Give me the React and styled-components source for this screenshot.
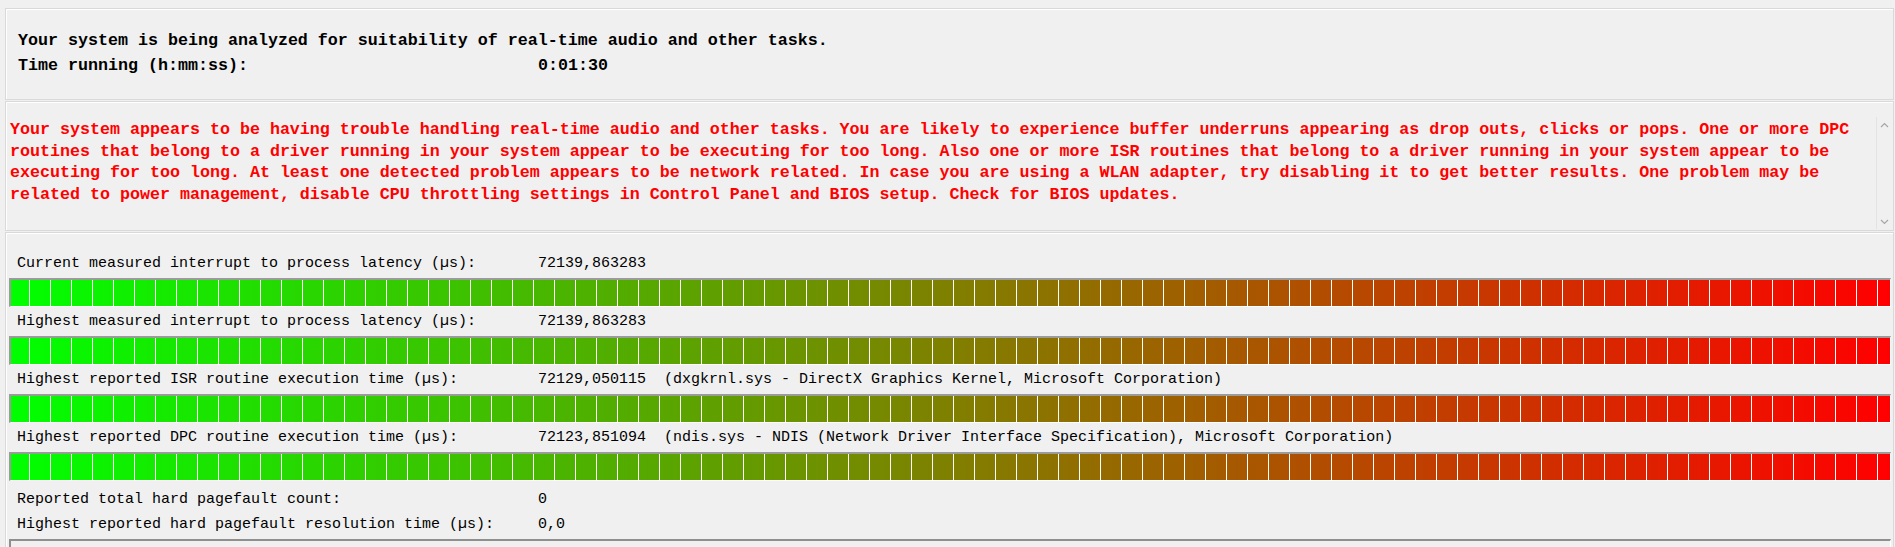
import React from 'react';
import styled, { createGlobalStyle } from 'styled-components';

const GlobalStyle = createGlobalStyle`
  html, body {
    margin: 0;
    padding: 0;
    background-color: #f0f0f0;
  }
  body {
    font-family: 'Liberation Mono', 'Courier New', monospace;
    color: #000000;
  }
`;

const Window = styled.div`
  display: flex;
  flex-direction: column;
  gap: 1px;
  padding: 8px 1px 0 5px;
  height: 547px;
  box-sizing: border-box;
  overflow: hidden;
`;

const Panel = styled.div`
  border: 1px solid #d9d9d9;
  box-shadow: inset 1px 1px 0 #ffffff;
  box-sizing: border-box;
  flex-shrink: 0;
`;

const StatusPanel = styled(Panel)`
  height: 92px;
  padding: 19px 12px 0 12px;
`;

const StatusRow = styled.div`
  display: grid;
  grid-template-columns: 520px auto;
  font-size: 16.667px;
  font-weight: bold;
  line-height: 25px;
  white-space: pre;
`;

const MessagePanel = styled(Panel)`
  height: 130px;
  padding: 15px 1px 0 2px;
`;

const Edit = styled.div`
  display: flex;
  height: 112px;
`;

const MessageText = styled.div`
  flex: 1;
  padding: 2px 0 0 2px;
  color: #ff0000;
  font-size: 16.667px;
  font-weight: bold;
  line-height: 21.5px;
  white-space: pre;
  overflow: hidden;
`;

const ScrollBar = styled.div`
  width: 16px;
  border-left: 1px solid #e3e3e3;
  display: flex;
  flex-direction: column;
  justify-content: space-between;
  align-items: center;
  padding: 5px 0 4px;
  box-sizing: border-box;
`;

const MetricsPanel = styled(Panel)`
  flex: 1;
  padding: 16px 2px 0 3px;
  border-bottom: none;
`;

const MetricRow = styled.div`
  display: grid;
  grid-template-columns: 521px auto;
  padding-left: 8px;
  font-size: 15px;
  line-height: ${(p) => p.$h || 29}px;
  height: ${(p) => p.$h || 29}px;
  white-space: pre;
`;

const Bar = styled.div`
  height: 29px;
  box-sizing: border-box;
  border-top: 2px solid #9b9b9b;
  border-left: 2px solid #9b9b9b;
  border-bottom: 1px solid #ffffff;
  border-right: 1px solid #ffffff;
  background-image:
    repeating-linear-gradient(to right, transparent 0, transparent 20px, #ffffff 20px, #ffffff 21px),
    linear-gradient(to right, #00ff00, #ff0000);
  background-position: -2px 0, 0 0;
  background-repeat: repeat, no-repeat;
`;

const Footer = styled.div`
  display: flex;
  flex-direction: column;
  padding-top: 6px;
`;

const ListBox = styled.div`
  margin-top: 2px;
  height: 20px;
  border-top: 2px solid #8f8f8f;
  border-left: 2px solid #8f8f8f;
  border-right: 1px solid #ffffff;
`;

const Chevron = ({ up }) => (
  <svg width="9" height="6" viewBox="0 0 9 6" fill="none">
    <path
      d={up ? 'M1 5 L4.5 1.5 L8 5' : 'M1 1 L4.5 4.5 L8 1'}
      stroke="#a6a6a6"
      strokeWidth="1.2"
    />
  </svg>
);

const messageLines = [
  'Your system appears to be having trouble handling real-time audio and other tasks. You are likely to experience buffer underruns appearing as drop outs, clicks or pops. One or more DPC',
  'routines that belong to a driver running in your system appear to be executing for too long. Also one or more ISR routines that belong to a driver running in your system appear to be',
  'executing for too long. At least one detected problem appears to be network related. In case you are using a WLAN adapter, try disabling it to get better results. One problem may be',
  'related to power management, disable CPU throttling settings in Control Panel and BIOS setup. Check for BIOS updates.',
];

const metrics = [
  { label: 'Current measured interrupt to process latency (µs):', value: '72139,863283' },
  { label: 'Highest measured interrupt to process latency (µs):', value: '72139,863283' },
  {
    label: 'Highest reported ISR routine execution time (µs):',
    value: '72129,050115  (dxgkrnl.sys - DirectX Graphics Kernel, Microsoft Corporation)',
  },
  {
    label: 'Highest reported DPC routine execution time (µs):',
    value: '72123,851094  (ndis.sys - NDIS (Network Driver Interface Specification), Microsoft Corporation)',
  },
];

const App = () => {
  return (
    <>
      <GlobalStyle />
      <Window>
        <StatusPanel>
          <StatusRow>
            <span>Your system is being analyzed for suitability of real-time audio and other tasks.</span>
          </StatusRow>
          <StatusRow>
            <span>Time running (h:mm:ss):</span>
            <span>0:01:30</span>
          </StatusRow>
        </StatusPanel>

        <MessagePanel>
          <Edit>
            <MessageText>
              {messageLines.map((line) => (
                <div key={line}>{line}</div>
              ))}
            </MessageText>
            <ScrollBar>
              <Chevron up />
              <Chevron />
            </ScrollBar>
          </Edit>
        </MessagePanel>

        <MetricsPanel>
          {metrics.map((m) => (
            <React.Fragment key={m.label}>
              <MetricRow>
                <span>{m.label}</span>
                <span>{m.value}</span>
              </MetricRow>
              <Bar />
            </React.Fragment>
          ))}
          <Footer>
            <MetricRow $h={25}>
              <span>Reported total hard pagefault count:</span>
              <span>0</span>
            </MetricRow>
            <MetricRow $h={25}>
              <span>Highest reported hard pagefault resolution time (µs):</span>
              <span>0,0</span>
            </MetricRow>
          </Footer>
          <ListBox />
        </MetricsPanel>
      </Window>
    </>
  );
};

export default App;
